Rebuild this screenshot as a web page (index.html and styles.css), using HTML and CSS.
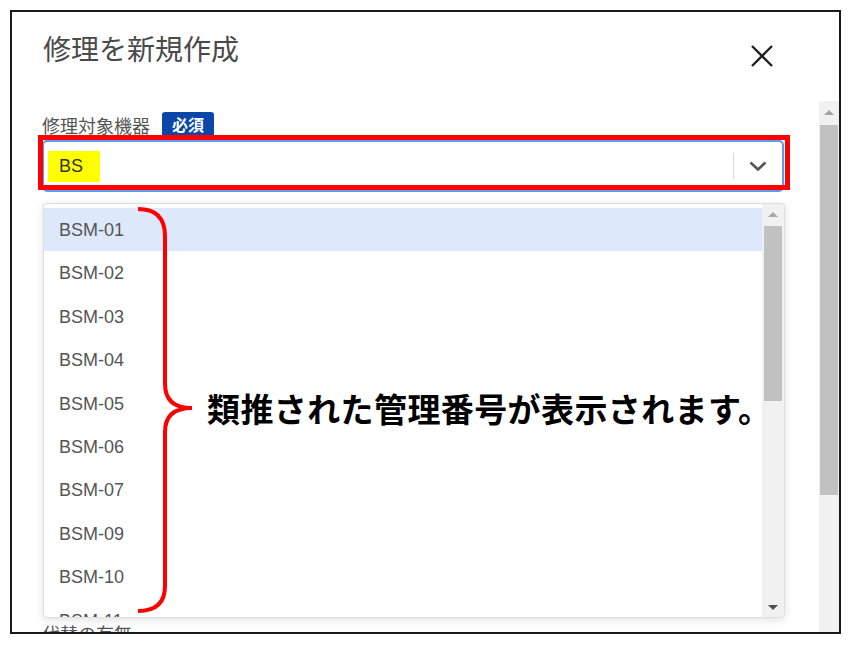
FILE: index.html
```html
<!DOCTYPE html>
<html lang="ja">
<head>
  <meta charset="UTF-8">
  <title>修理を新規作成</title>
  <link rel="stylesheet" href="styles.css">
</head>
<body>
  <div class="modal">
    <div class="modal-header">
      <h1 class="modal-title">修理を新規作成</h1>
      <button class="close-btn" aria-label="閉じる">
        <svg width="22" height="22" viewBox="0 0 22 22">
          <path d="M1 1 L21 21 M21 1 L1 21" stroke="#222" stroke-width="2.4" fill="none"/>
        </svg>
      </button>
    </div>

    <div class="modal-body">
      <div class="modal-content">
        <div class="field field-select">
          <div class="field-label">
            <span>修理対象機器</span>
            <span class="badge">必須</span>
          </div>
          <div class="select-box">
            <div class="select-value"><span class="marker">BS</span></div>
            <div class="select-indicator">
              <svg width="18" height="10" viewBox="0 0 18 10">
                <path d="M1.5 1.5 L9 8.5 L16.5 1.5" stroke="#555" stroke-width="2.6" fill="none"/>
              </svg>
            </div>
          </div>

          <div class="dropdown">
            <ul class="dropdown-list">
              <li class="option active">BSM-01</li>
              <li class="option">BSM-02</li>
              <li class="option">BSM-03</li>
              <li class="option">BSM-04</li>
              <li class="option">BSM-05</li>
              <li class="option">BSM-06</li>
              <li class="option">BSM-07</li>
              <li class="option">BSM-09</li>
              <li class="option">BSM-10</li>
              <li class="option">BSM-11</li>
            </ul>
            <div class="scrollbar scrollbar-small">
              <div class="sb-btn"><span class="arrow-up light"></span></div>
              <div class="sb-thumb small-thumb"></div>
              <div class="sb-fill"></div>
              <div class="sb-btn"><span class="arrow-down"></span></div>
            </div>
          </div>
        </div>

        <div class="field field-next">
          <div class="field-label"><span>代替の有無</span></div>
        </div>
      </div>

      <div class="scrollbar scrollbar-main">
        <div class="sb-btn main-btn"><span class="arrow-up"></span></div>
        <div class="sb-thumb main-thumb"></div>
      </div>
    </div>
  </div>

  <!-- annotations drawn over the screenshot -->
  <div class="note-box"></div>
  <svg class="note-brace" width="70" height="420" viewBox="0 0 70 420">
    <path d="M8 9 Q35 9 35 36 L35 184 Q35 208 62 208 Q35 208 35 232 L35 386 Q35 411 8 411"
          stroke="#ff0000" stroke-width="4" fill="none"/>
  </svg>
  <div class="note-text">類推された管理番号が表示されます。</div>
</body>
</html>
```

FILE: styles.css
```css
body {
  margin: 0;
  background: #fff;
  font-family: "Liberation Sans", "Noto Sans CJK JP", sans-serif;
  color: #333;
  position: relative;
  width: 855px;
  height: 647px;
  overflow: hidden;
}

.modal {
  margin: 10px;
  width: 827px;
  height: 620px;
  border: 2px solid #1a1a1a;
  display: flex;
  flex-direction: column;
  background: #fff;
}

.modal-header {
  height: 89px;
  display: flex;
  justify-content: space-between;
  align-items: flex-start;
  padding: 0 66px 0 31px;
  box-sizing: border-box;
}

.modal-title {
  margin: 20px 0 0;
  font-family: "Noto Sans CJK JP", sans-serif;
  font-size: 28px;
  font-weight: 400;
  line-height: 1.2;
  color: #4a4a4a;
}

.close-btn {
  margin-top: 33px;
  padding: 0;
  border: 0;
  background: none;
  width: 22px;
  height: 22px;
}

.modal-body {
  flex: 1;
  display: flex;
  min-height: 0;
}

.modal-content {
  flex: 1;
  padding: 11px 35px 0 30px;
  overflow: hidden;
}

.field-select {
  position: relative;
}

.field-next {
  margin-top: 428px;
}

.field-label {
  display: flex;
  align-items: center;
  gap: 12px;
  height: 25px;
  font-family: "Noto Sans CJK JP", sans-serif;
  font-size: 18px;
  color: #555;
}

.badge {
  background: #0b47a8;
  color: #fff;
  font-weight: 700;
  font-size: 16px;
  height: 25px;
  line-height: 25px;
  padding: 0 10px;
  border-radius: 3px;
}

.select-box {
  margin-top: 3px;
  height: 52px;
  box-sizing: border-box;
  border: 2px solid #5a9cf0;
  border-radius: 5px;
  display: flex;
  align-items: center;
}

.select-value {
  flex: 1;
  padding-left: 4px;
}

.marker {
  display: inline-block;
  background: #ffff00;
  font-size: 18px;
  line-height: 31px;
  padding: 0 17px 0 11px;
  color: #333;
}

.select-indicator {
  width: 48px;
  height: 26px;
  border-left: 1px solid #d6d6d6;
  display: flex;
  align-items: center;
  justify-content: center;
}

/* dropdown */
.dropdown {
  position: absolute;
  top: calc(100% + 11px);
  left: 1px;
  right: -1px;
  height: 415px;
  box-sizing: border-box;
  background: #fff;
  border: 1px solid #dedede;
  border-radius: 4px;
  box-shadow: 0 2px 8px rgba(0, 0, 0, 0.12);
  display: flex;
  overflow: hidden;
  z-index: 5;
}

.dropdown-list {
  flex: 1;
  list-style: none;
  margin: 0;
  padding: 4px 0 0;
  overflow: hidden;
}

.option {
  height: 43.4px;
  line-height: 45px;
  padding-left: 15px;
  font-size: 18px;
  color: #555;
}

.option.active {
  background: #dde9fb;
}

/* scrollbars */
.scrollbar {
  display: flex;
  flex-direction: column;
  align-items: center;
  background: #f1f1f1;
}

.scrollbar-small {
  width: 22px;
}

.scrollbar-main {
  width: 20px;
}

.sb-btn {
  height: 20px;
  width: 100%;
  display: flex;
  align-items: center;
  justify-content: center;
}

.main-btn {
  height: 22px;
}

.sb-thumb {
  background: #c1c1c1;
  margin-top: 2px;
}

.small-thumb {
  width: 18px;
  height: 175px;
}

.main-thumb {
  width: 18px;
  height: 370px;
}

.sb-fill {
  flex: 1;
}

.arrow-up,
.arrow-down {
  width: 0;
  height: 0;
  border-left: 5px solid transparent;
  border-right: 5px solid transparent;
}

.arrow-up {
  border-bottom: 5px solid #a3a3a3;
}

.arrow-up.light {
  border-bottom-color: #a8a8a8;
}

.arrow-down {
  border-top: 5px solid #505050;
}

/* annotations */
.note-box {
  position: absolute;
  left: 38px;
  top: 135px;
  width: 752px;
  height: 55px;
  box-sizing: border-box;
  border: 5px solid #ff0000;
  z-index: 10;
}

.note-brace {
  position: absolute;
  left: 130px;
  top: 200px;
  z-index: 10;
}

.note-text {
  position: absolute;
  left: 207px;
  top: 392px;
  font-family: "Noto Sans CJK JP", sans-serif;
  font-size: 33px;
  font-weight: 700;
  line-height: 1;
  letter-spacing: 0.4px;
  color: #000;
  white-space: nowrap;
  z-index: 10;
}
```
